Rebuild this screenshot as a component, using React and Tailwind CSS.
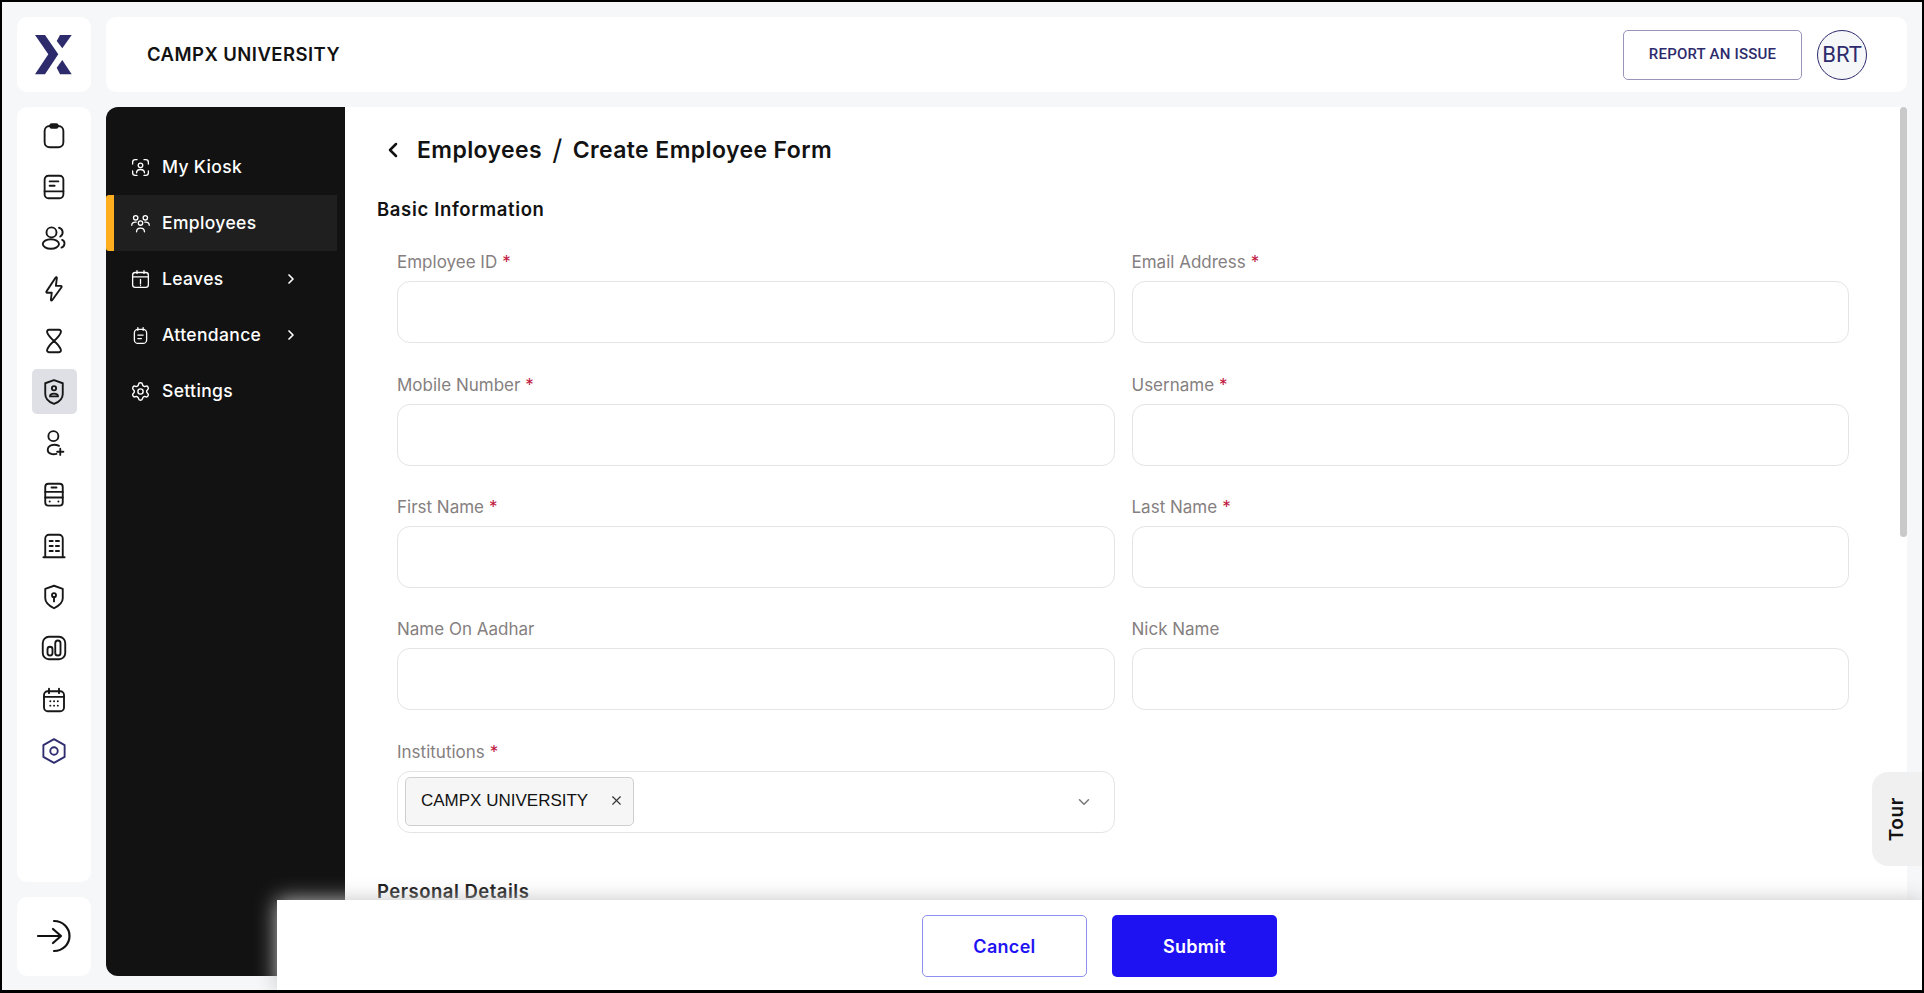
import { ChevronDown, ChevronLeft, ChevronRight, Settings, X } from 'lucide-react';

const RAIL = [
  <g key="a"><rect x="4.500" y="4" width="15" height="17" rx="4" /><rect x="9" y="2.500" width="6" height="3" rx="1.200" /></g>,
  <g key="b"><path d="M7.500 3h9A3 3 0 0 1 19.500 6v12a3 3 0 0 1-3 3h-9a3 3 0 0 1-3-3V6a3 3 0 0 1 3-3Z" /><path d="M4.500 15.500h15M8.500 7.500h7M8.500 11h4" /></g>,
  <g key="c"><circle cx="10" cy="7.500" r="4" /><ellipse cx="9.500" cy="16.800" rx="6.500" ry="3.800" /><path d="M16 3.800a3.800 3.800 0 0 1 1 7M18.500 13.500c2.600 1 2.600 5-.5 6.200" /></g>,
  <g key="d"><path d="M13.300 2.800c.4-.5 1.100-.2 1 .4L13.500 9.500h4c.6 0 .9.600.5 1.100L10.500 21c-.4.500-1.100.2-1-.4l.7-5.600H6.500c-.6 0-.9-.6-.5-1.100Z" /></g>,
  <g key="e"><path d="M8 3h8c1.300 0 1.900 1.200 1.400 2.300C16.300 8 14.300 10 12 12 9.700 10 7.700 8 6.600 5.300 6.100 4.200 6.700 3 8 3Z" /><path d="M8 21h8c1.300 0 1.900-1.200 1.400-2.300C16.300 16 14.300 14 12 12c-2.300 2-4.300 4-5.400 6.700-.5 1.100.1 2.300 1.400 2.300Z" /></g>,
  <g key="f"><path d="M12 2.500 19 5v8.500c0 3.500-3 6.500-7 8-4-1.500-7-4.500-7-8V5Z" /><circle cx="12" cy="9" r="1.700" /><path d="M8.800 15.500c0-3 6.400-3 6.400 0Z" /></g>,
  <g key="g"><circle cx="11.500" cy="6.500" r="4" /><path d="M16 14.300c-4-2-9-.5-9 3.200 0 2.800 3.500 4 7 3.200M17 16.500v5M14.500 19h5" /></g>,
  <g key="h"><rect x="5" y="3" width="14" height="17.500" rx="2.500" /><path d="M5 9.500h14M5 14h14M10 6h4" /><path d="M8.500 17.200h.1M15.500 17.200h.1" /></g>,
  <g key="i"><path d="M5 21V6a3 3 0 0 1 3-3h8a3 3 0 0 1 3 3v15M3.500 21h17M8.500 8h2.500M13.500 8h2.500M8.500 12h2.500M13.500 12h2.500M8.500 16h2.500M13.500 16h2.500" /></g>,
  <g key="j"><path d="M12 3 19 5.500v7.500c0 3.500-3 6-7 8-4-2-7-4.500-7-8V5.500Z" /><circle cx="12" cy="10.500" r="1.600" /><path d="M12 12v3.500" /></g>,
  <g key="k"><rect x="3" y="3" width="18" height="18" rx="5" /><rect x="6.800" y="11" width="4" height="7" rx="2" /><rect x="13" y="6" width="4.200" height="12" rx="2.100" /></g>,
  <g key="l"><rect x="4" y="5" width="16" height="16" rx="3" /><path d="M4 9.500h16M8 3v3.500M16 3v3.500M9 13h.1M12 13h.1M15 13h.1M9 16.500h.1M12 16.500h.1M15 16.500h.1" /></g>,
  <g key="m" stroke="#312e6f"><path d="M12 2.500 20.500 7.250v9.500L12 21.500l-8.500-4.750v-9.500Z" /><circle cx="12" cy="12" r="3" /></g>,
];

const NAV = [
  {
    label: 'My Kiosk',
    icon: <g><path d="M3 8V6a3 3 0 0 1 3-3h2M16 3h2a3 3 0 0 1 3 3v2M3 16v2a3 3 0 0 0 3 3h2M16 21h2a3 3 0 0 0 3-3v-2" /><circle cx="12" cy="9.500" r="2.600" /><path d="M7.500 18c0-5 9-5 9 0" /></g>,
  },
  {
    label: 'Employees',
    active: true,
    icon: <g><circle cx="6.500" cy="5.500" r="2.500" /><circle cx="17.500" cy="5.500" r="2.500" /><circle cx="12" cy="11.500" r="2.500" /><path d="M2 14c0-3 2.500-4 5-3.500M22 14c0-3-2.500-4-5-3.500M7.500 21.500c0-5.500 9-5.500 9 0" /></g>,
  },
  {
    label: 'Leaves',
    sub: true,
    icon: <g><rect x="3" y="4" width="18" height="17" rx="3" /><path d="M3 9h18M8 2v3M16 2v3M12 12v5M12 19v.1" /></g>,
  },
  {
    label: 'Attendance',
    sub: true,
    icon: <g><rect x="5" y="5" width="14" height="16" rx="4" /><path d="M9 3v3M15 3v3M9 11.500h6M9 15.500h4" /></g>,
  },
  {
    label: 'Settings',
    icon: <Settings width="24" height="24" color="#fff" strokeWidth={1.600} />,
  },
];

const ROWS = [
  [['Employee ID', true], ['Email Address', true]],
  [['Mobile Number', true], ['Username', true]],
  [['First Name', true], ['Last Name', true]],
  [['Name On Aadhar', false], ['Nick Name', false]],
];

function Label({ text, required }) {
  return (
    <label className="block h-[20px] text-[17px] leading-[20px] text-[#85807f]">
      {text}
      {required && <span className="ml-[5px] text-[#c0143c]">*</span>}
    </label>
  );
}

function Field({ text, required }) {
  return (
    <div className="h-[122.4px] pt-[9px]">
      <Label text={text} required={required} />
      <div className="mt-[9px] h-[62px] rounded-[13px] border border-[#e4e4e4] bg-white" />
    </div>
  );
}

export default function App() {
  return (
    <div className="relative flex h-[993px] w-[1924px] gap-[15px] overflow-hidden border-2 border-b-[3px] border-black bg-[#f6f7f9] px-[15px] pb-[14px] pt-[15px] font-['Inter',sans-serif]">
      {/* left rail */}
      <div className="flex w-[74px] shrink-0 flex-col gap-[15px]">
        <div className="flex h-[75px] items-center justify-center rounded-[10px] bg-white">
          <svg width="60" height="60" viewBox="0 0 60 60" fill="#2e2b6c" className="ml-[2px]">
            <path d="M10 10h10l13.300 19.300L20 49.300H10l13.300-20Z" />
            <path d="M35 10h11.700l-9.400 13.300-5.600-7.300Z" />
            <path d="M37.300 35l9.400 14.300H35l-3.300-6.600Z" />
          </svg>
        </div>
        <div className="flex flex-1 flex-col items-center gap-[6.3px] rounded-[10px] bg-white pt-[6px]">
          {RAIL.map((icon, i) => (
            <div key={i} className={`flex h-[45px] w-[45px] items-center justify-center rounded-[5px] ${i === 5 ? 'bg-[#dfe0e5]' : ''}`}>
              <svg width="30" height="30" viewBox="0 0 24 24" fill="none" stroke="#171717" strokeWidth="1.500" strokeLinecap="round" strokeLinejoin="round">{icon}</svg>
            </div>
          ))}
        </div>
        <div className="flex h-[79px] items-center justify-center rounded-[10px] bg-white">
          <svg width="36" height="34" viewBox="0 0 36 34" fill="none" stroke="#111" strokeWidth="2.200" strokeLinecap="round" strokeLinejoin="round" className="mb-[2px]">
            <path d="M2 17h23M17 10l8 7-8 7" />
            <path d="M18 2c9 0 15.500 7 15.500 15S27 32 18 32" />
          </svg>
        </div>
      </div>

      <div className="flex min-w-0 flex-1 flex-col gap-[15px]">
        {/* header */}
        <header className="flex h-[75px] shrink-0 items-center justify-between rounded-[10px] bg-white pl-[41px] pr-[40px]">
          <span className="text-[18.5px] font-semibold tracking-[0.45px] text-[#121212]">CAMPX UNIVERSITY</span>
          <div className="flex items-center gap-[15px]">
            <button className="h-[50px] w-[179px] rounded-[5px] border border-[#9a94ba] bg-white font-['Roboto',sans-serif] text-[15px] font-medium tracking-[0.2px] text-[#2e2b6c]">REPORT AN ISSUE</button>
            <div className="flex h-[50px] w-[50px] items-center justify-center rounded-full border border-[#2e2b6c] bg-[#f6f7f9] font-['Roboto',sans-serif] text-[22px] text-[#2e2b6c]">BRT</div>
          </div>
        </header>

        <div className="flex min-h-0 flex-1 overflow-hidden rounded-l-[12px]">
          {/* dark side nav */}
          <nav className="w-[239px] shrink-0 bg-[#121212] pt-[32px]">
            {NAV.map((item) => (
              <div key={item.label} className={`flex h-[56px] w-[231px] items-center pl-[24px] ${item.active ? 'rounded-l-[3px] border-l-[8px] border-[#ffae1f] bg-[#1f1f1f] !pl-[16px]' : ''}`}>
                <svg width="21" height="21" viewBox="0 0 24 24" fill="none" stroke="#fff" strokeWidth="1.500" strokeLinecap="round" strokeLinejoin="round">{item.icon}</svg>
                <span className="ml-[11px] text-[17.5px] font-medium tracking-[0.35px] text-white">{item.label}</span>
                {item.sub && <ChevronRight size={16} color="#fff" strokeWidth={2.500} className="absolute left-[281px]" />}
              </div>
            ))}
          </nav>

          {/* form area */}
          <main className="relative min-w-0 flex-1 overflow-hidden bg-white pl-[32px] pr-[58px]">
            <div className="flex items-center pt-[26px] text-[23px] font-semibold tracking-[0.4px] text-[#121212]">
              <ChevronLeft size={24} strokeWidth={2.500} className="ml-[4px]" />
              <span className="ml-[12px]">Employees</span>
              <span className="ml-[10px] text-[28px] font-normal leading-none">/</span>
              <span className="ml-[10px]">Create Employee Form</span>
            </div>
            <h2 className="mt-[28px] text-[18.5px] font-semibold tracking-[0.65px] text-[#121212]">Basic Information</h2>
            <div className="mt-[20px] pl-[20px]">
              {ROWS.map((row) => (
                <div key={row[0][0]} className="grid grid-cols-2 gap-x-[17px]">
                  {row.map(([text, required]) => <Field key={text} text={text} required={required} />)}
                </div>
              ))}
              <div className="grid grid-cols-2 gap-x-[17px]">
                <div className="pt-[9px]">
                  <Label text="Institutions" required />
                  <div className="mt-[9px] flex h-[62px] items-center justify-between rounded-[13px] border border-[#e4e4e4] bg-white pl-[7px] pr-[21px]">
                    <div className="flex h-[49px] w-[229px] items-center justify-between rounded-[5px] border border-[#cfcfcf] bg-[#f6f6f6] pb-[2px] pl-[15px] pr-[9px] font-['Liberation_Sans',sans-serif] text-[17px] text-[#121212]">
                      CAMPX UNIVERSITY
                      <X size={15} strokeWidth={1.800} color="#333" />
                    </div>
                    <ChevronDown size={18} color="#777" strokeWidth={2} />
                  </div>
                </div>
              </div>
            </div>
            <h2 className="mt-[45px] text-[18.5px] font-semibold tracking-[0.5px] text-[#121212]">Personal Details</h2>

            {/* scrollbar thumb */}
            <div className="absolute right-0 top-0 h-[430px] w-[7px] rounded-[4px] bg-[#c9c9c9]" />
          </main>
        </div>
      </div>

      {/* tour tab */}
      <div className="absolute bottom-[124px] right-0 flex h-[94px] w-[50px] items-center justify-center rounded-l-[16px] bg-[#f0f0f0]">
        <span className="-rotate-90 text-[19px] font-semibold tracking-[0.6px] text-[#121212]">Tour</span>
      </div>

      {/* sticky footer */}
      <div className="absolute bottom-0 left-[275px] right-0 flex h-[90px] items-start justify-center gap-[25px] bg-white pt-[15px] shadow-[0_0_20px_#c4c4c4]">
        <button className="h-[62px] w-[165px] rounded-[5px] border border-[#8f8ff0] bg-white text-[18px] font-semibold tracking-[0.3px] text-[#1f12f2]">Cancel</button>
        <button className="h-[62px] w-[165px] rounded-[5px] bg-[#1f12f2] text-[18px] font-semibold tracking-[0.3px] text-white">Submit</button>
      </div>
    </div>
  );
}
